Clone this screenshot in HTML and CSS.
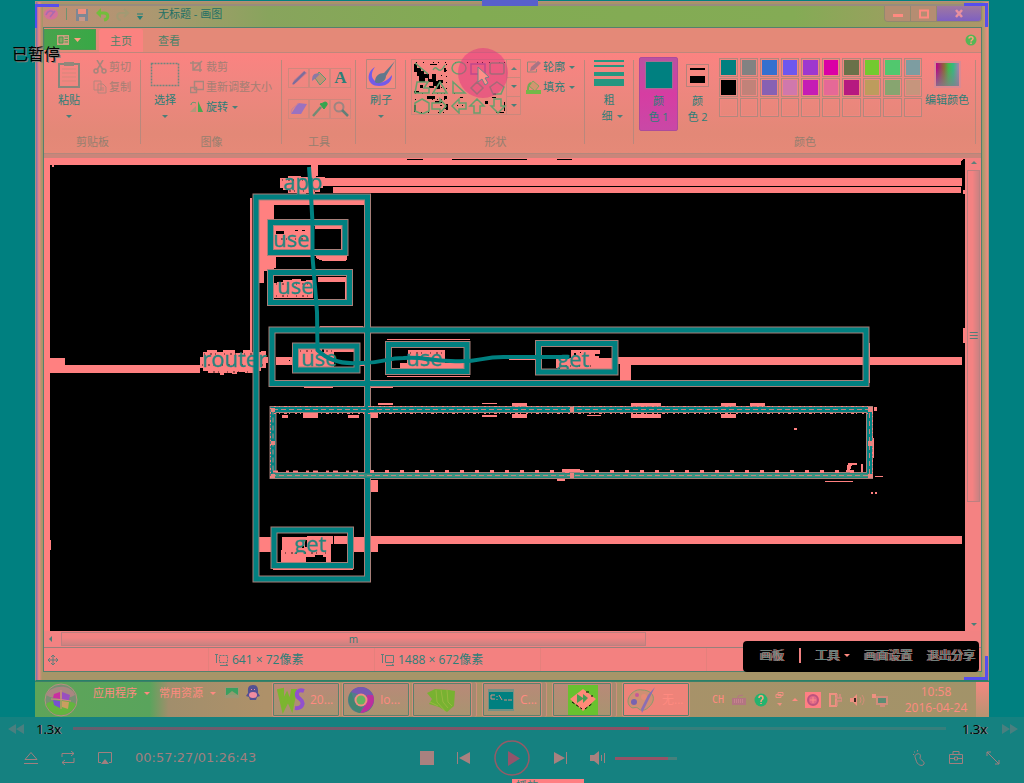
FILE: index.html
```html
<!DOCTYPE html>
<html lang="zh-CN">
<head>
<meta charset="utf-8">
<title>无标题 - 画图</title>
<link rel="stylesheet" href="styles.css">
</head>
<body>
<main class="screen">
  <section class="window">
    <i class="corner corner-tl"></i><i class="corner corner-tr"></i><i class="corner corner-br"></i><i class="grip"></i>
    <header class="titlebar">
      <svg class="quick" width="104" height="20" viewBox="0 0 104 20" fill="none">
        <ellipse cx="8" cy="10" rx="7" ry="5.500" fill="#d4719b"/><path d="M3 11c2-5 6-5 8-2M7 13l5-6" stroke="#a96ab0" stroke-width="1.500"/>
        <path d="M23.500 4v12" stroke="#6f9270"/>
        <path d="M33 5h12v12H33z" fill="#7e8794"/><path d="M35 5h8v5h-8z" fill="#f08e80"/><path d="M36 13h6v4h-6z" fill="#c9988a"/>
        <path d="M55 9h6c5 0 5 6 0 7" stroke="#72bd3c" stroke-width="3"/><path d="m58 4-5 5 5 5z" fill="#72bd3c"/>
        <path d="M84 9h-6c-5 0-5 6 0 7M81 5l4 4-4 4" stroke="#a29a73" stroke-width="2"/>
        <path d="M94 10h6" stroke="#237f78"/><path d="M94 12h6l-3 4z" fill="#237f78"/>
      </svg>
      <h1>无标题 - 画图</h1>
      <div class="winbtns">
        <button aria-label="最小化"><svg width="12" height="8"><path d="M1 4h10v3H1z" fill="#ff8a80"/></svg></button>
        <button aria-label="最大化"><svg width="12" height="10" fill="none"><path d="M2 1.500h8v7H2z" stroke="#ff8a80" stroke-width="2"/></svg></button>
        <button class="close" aria-label="关闭"><svg width="10" height="9"><path d="m2 1 6 7m0-7L2 8" stroke="#e890a0" stroke-width="2.500"/></svg></button>
      </div>
    </header>
    <div class="client">
      <nav class="tabs">
        <button class="file" aria-label="文件"><svg width="30" height="14" viewBox="0 0 30 14"><path d="M2 2h12v10H2z" fill="#d0a080"/><path d="M4 4h4v6H4zM9.500 4H13M9.500 6.500H13M9.500 9H13" stroke="#4a9a50" fill="#85a865"/><path d="M19 5h7l-3.500 4z" fill="#ffa080"/></svg></button>
        <button class="tab active">主页</button>
        <button class="tab">查看</button>
        <button class="help" aria-label="帮助"><svg width="12" height="12"><circle cx="6" cy="6" r="5.500" fill="#55b655"/><path d="M4 4.500c0-2.500 4-2.500 4 0 0 1.500-2 1.500-2 3m0 1v1.500" stroke="#ffa080" fill="none" stroke-width="1.500"/></svg></button>
      </nav>
      <div class="ribbon">
        <section class="group clipboard">
          <div class="tools">
            <button class="big"><svg width="26" height="30" fill="none"><path d="M3 5h20v23H3z" stroke="#87877b" stroke-width="2"/><path d="M6 10h14M6 14h14M6 18h14M6 22h14" stroke="#d5877b"/><path d="M8 3h10v4H8z" fill="#92877a"/></svg><span>粘贴</span><b class="arr"></b></button>
            <div class="list">
              <button class="dim"><svg width="14" height="14" fill="none" stroke="#a6867c" stroke-width="1.500"><path d="m4 0 6 10M10 0 4 10"/><circle cx="3" cy="11" r="2"/><circle cx="11" cy="11" r="2"/></svg>剪切</button>
              <button class="dim"><svg width="14" height="14" fill="none" stroke="#b4857d"><path d="M1 1h7v9H1zM5 4h5l3 3v6H5zM7 8h4M7 10h4"/></svg>复制</button>
            </div>
          </div><h2>剪贴板</h2>
        </section>
        <section class="group image">
          <div class="tools">
            <button class="big"><svg width="30" height="30" fill="none"><path d="M1.500 4.500h27v22h-27z" stroke="#6e867e" stroke-width="1.500" stroke-dasharray="2 1"/></svg><span>选择</span><b class="arr"></b></button>
            <div class="list">
              <button class="dim"><svg width="14" height="14" fill="none" stroke="#a6867c" stroke-width="1.500"><path d="M3 1v9h9M0 3h10v9M3 10l9-9"/></svg>裁剪</button>
              <button class="dim"><svg width="14" height="14" fill="none" stroke="#a6867c"><path d="M4.500 1.500h9v8h-9zM.500 7.500h6v5h-6z" stroke-width="1.500"/></svg>重新调整大小</button>
              <button><svg width="14" height="14"><path d="M8 1v11h5z" fill="#46a94e"/><path d="M6 6v6H0z" fill="#b0987a"/><path d="M1 5c0-3 3-3 5-2" fill="none" stroke="#4a9d70"/></svg>旋转<b class="arr"></b></button>
            </div>
          </div><h2>图像</h2>
        </section>
        <section class="group kit">
          <div class="tools kitgrid">
            <button aria-label="铅笔"><svg width="18" height="18"><path d="m2 16 2-5 10-9 3 2-10 9z" fill="#b47b92"/><path d="m3 15 12-12" stroke="#7b6c9c" stroke-width="2"/></svg></button>
            <button aria-label="填充"><svg width="18" height="18"><path d="m8 3 7 7-6 6-5-7z" fill="#c29174" stroke="#5d9873"/><path d="M9 5C3 3 1 6 1 12l4-3" fill="#8a79a4"/></svg></button>
            <button class="letter" aria-label="文本">A</button>
            <button aria-label="橡皮"><svg width="18" height="18"><path d="m8 3 9 1-6 10H1z" fill="#9a72c0"/><path d="m1 13 1-4 7-6" stroke="#c080a0" fill="none"/></svg></button>
            <button aria-label="取色"><svg width="18" height="18"><path d="m2 16 8-9" stroke="#718b75" stroke-width="2.500"/><path d="m9 4 4 5 3-4c1-4-3-3-4-2z" fill="#35a54f" stroke="#35a54f"/></svg></button>
            <button aria-label="放大镜"><svg width="18" height="18" fill="none"><circle cx="7" cy="7" r="4.500" stroke="#9c8581" stroke-width="2"/><path d="m10 10 6 6" stroke="#628079" stroke-width="2.500"/></svg></button>
          </div><h2>工具</h2>
        </section>
        <section class="group brush">
          <div class="tools"><button class="big"><svg width="30" height="30"><path d="M.500.500h29v29H.500z" fill="#f38a80" stroke="#b4877c"/><path d="M9 8C0 13 0 27 13 27c9 0 13-5 13-11-5 6-10 9-15 7-7-3-6-10-2-15z" fill="#745be8"/><path d="m29 2-9 15c0 6-8 9-11 6 0-6 4-9 9-9z" fill="#61788c"/></svg><span>刷子</span><b class="arr"></b></button></div><h2></h2>
        </section>
        <section class="group shapes">
          <div class="tools">
            <div class="gallery">
              <svg width="94" height="54" viewBox="0 0 94 54" fill="none">
                <g fill="#000" shape-rendering="crispEdges"><path d="M2 4h3v4h4v3h3v3h5v5h3v-5h4v7h4v8h-4v-3h-3v-4h-5v-4h-3v4H7v-6H5v-4H2zM18 4h7v1h-7zM32 8h2v4h-2zM26 20h5v3h-5zM8 25h3v3H8zM17 26h5v2h-5zM2 31h5v2H2zM15 36h8v3h-8zM23 41h7v2h-7zM32 36h3v3h-3zM48 37h3v1h-3zM73 41h3v3h-3zM80 37h4v1h-4zM81 33h3v2h-3zM92 42h1v9h-1zM84 52h8v1h-8zM2 45h2v7H2zM31 48h5v1h-5zM34 44h2v6h-2z"/><path d="M4 2h90M3 33h42M3 39h35M28 45h29M9 52h28" stroke="#000" stroke-dasharray="1 6 1 9 1 4"/><path d="M34 4v25M29 15v36" stroke="#000" stroke-dasharray="1 5"/></g>
                <g stroke="#68a06d" stroke-width="1.500"><path d="m3 3 13 11M21 10c4-8 5 8 12-5"/><ellipse cx="47" cy="8" rx="7" ry="6"/><path d="M59 4h14v10H59z" stroke="#9a5f96"/><rect x="78" y="3" width="14" height="11" rx="2"/><path d="M5 22h11l-4 6h5v5H3zM28 22l-7 11h14zM41 22v11h12zM65 22l-6 6 6 6 6-6zM85 22l7 5-3 7h-8l-3-7z"/><path d="m10 39 7 4v8l-7 3-7-3v-8zM20 43h8v-4l6 7-6 7v-4h-8zM54 43h-7v-4l-7 7 7 7v-4h7zM65 39l-7 7h4v7h6v-7h4zM82 39h7v7h4l-7 7-7-7h3z"/></g>
              </svg>
              <div class="gside"><button aria-label="上"><b class="up"></b></button><button aria-label="下"><b class="arr"></b></button><button aria-label="更多"><b class="arr"></b></button></div>
              <div class="halo"><svg width="12" height="20"><path d="M1 1v15l4-3 3 6 3-2-3-5 4-1z" fill="#ff8f88" stroke="#6f8788"/></svg></div>
            </div>
            <div class="list">
              <button><svg width="15" height="14"><path d="M10 2H1.500v10h9V9" stroke="#91887a" fill="none"/><path d="m4 11 1-4 7-6 3 2-7 7z" fill="#a87585"/></svg>轮廓<b class="arr"></b></button>
              <button><svg width="15" height="14"><path d="M0 10h15v4H0z" fill="#73b948"/><path d="m7 1 6 5-4 5-6-5z" fill="#d39470" stroke="#80a65e"/><path d="M5 3C2 4 2 8 2 10" stroke="#75a855" fill="none" stroke-width="2"/></svg>填充<b class="arr"></b></button>
            </div>
          </div><h2>形状</h2>
        </section>
        <section class="group size">
          <div class="tools"><button class="big"><svg width="30" height="30" fill="#269680"><path d="M0 1h30v2H0zM0 6h30v2H0zM0 13h30v4H0zM0 20h30v7H0z"/></svg><span>粗</span><span>细<b class="arr"></b></span></button></div><h2></h2>
        </section>
        <section class="group colours">
          <div class="tools">
            <button class="pick on"><i class="sw1"></i><span>颜</span><span>色 1</span></button>
            <button class="pick"><i class="sw2"></i><span>颜</span><span>色 2</span></button>
            <div class="palette">
              <button class="c1"></button><button class="c2"></button><button class="c3"></button><button class="c4"></button><button class="c5"></button><button class="c6"></button><button class="c7"></button><button class="c8"></button><button class="c9"></button><button class="c10"></button>
              <button class="c11"></button><button class="c12"></button><button class="c13"></button><button class="c14"></button><button class="c15"></button><button class="c16"></button><button class="c17"></button><button class="c18"></button><button class="c19"></button><button class="c20"></button>
              <button></button><button></button><button></button><button></button><button></button><button></button><button></button><button></button><button></button><button></button>
            </div>
            <button class="big edit"><i class="spectrum"></i><span>编辑颜色</span></button>
          </div><h2>颜色</h2>
        </section>
      </div>
      <div class="work">
        <svg class="canvas" viewBox="50 158 915 473" preserveAspectRatio="xMinYMin slice" fill="none">
          <defs>
            <clipPath id="g1"><path d="M550 340h60v29h-60z"/></clipPath><clipPath id="g2"><path d="M290 525h60v29h-60z"/></clipPath>
          </defs>
          <path d="M50 158h915v473H50z" fill="#000"/>
          <g fill="#ff8080" shape-rendering="crispEdges">
            <path d="M50 158h915v1h-2l-2 2v4H54v2h-2v-2h-2z"/>
            <path d="M311 164h7v12h-7zM323 178h639v8H323zM333 187h628v6H333z"/>
            <path d="M250 198h2v170h-2zM258 199h110v6h-94v66h-10v12h-6z"/>
            <path d="M273 225h40v25h-40zM315 225h28v4h-28zM341 229h1v20h-1zM316 256h31v3l-2 2h-22l-6-2zM266 255h10v13h-10zM274 255h37v2h-37z"/>
            <path d="M318 277h28v22h-1v-17h-27zM273 274h40v1h-40z"/>
            <path d="M50 358h15v7h135v8H50zM276 357h20v8h-20zM355 362h12v4h-12zM618 357h344v8H631v15h-11v-16h-2zM304 387h29v1h-29zM370 386h23v2h-23zM320 326h43v1h-43zM387 339h83v1h-83zM387 376h83v1h-83zM863 332h1v50h-1zM869 343h1v40h-1zM299 367h56v2h-56zM324 349h30v3h-30zM400 363h64v7h-64zM509 357h30v3h-30zM560 358h54v12h-54z"/>
            <path d="M259 537h13v15h-13zM353 537h13v15h-13zM370 536h592v8H378v8h-8zM334 536h15v8h-15zM273 569h80v1h-80zM370 480h8v12h-8zM259 576h107v1H259z"/>
            <path d="M282 415h6v3h-6zM303 413h15v5h-15zM348 415h11v3h-11zM370 412h8v6h-8zM378 403h15v2h-15zM482 403h15v1h-15zM482 415h15v2h-15zM512 403h15v3h-15zM512 414h15v4h-15zM631 403h30v3h-30zM631 414h30v4h-30zM721 403h15v3h-15zM721 414h15v4h-15zM750 403h15v3h-15zM587 415h14v1h-14zM794 428h3v2h-3zM874 407h3v4h-3zM870 412h3v18h-3zM872 438h2v20h-2zM875 476h8v1h-8zM871 492h2v2h-2zM875 492h2v2h-2zM825 481h28v1h-28zM557 479h8v2h-8zM562 469h18v4h-18zM846 472l2-9h9v2h-5l-3 8h-3zM861 464h2v8h-2z"/>
            <path d="M50 540h1v10h-1zM963 190h2v4h-2zM963 328h2v15h-2z"/>
            <path d="M280 178h8v-2h13v1h9v-2h6v2h9v6h-2v5h-3v4h-5v2h-4v-1h-5v1h-9v-1h-9v-3h-5v-2h-3z"/>
            <path d="M200 357h3v-5h4v-2h10v2h6v-2h12v3h8v-3h7v2h11v-1h5v6h2v6h-2v5h-5v3h-4v2h-12v-1h-8v2h-5v-1h-8v2h-4v-2h-12v-2h-5v-3h-3z"/>
            <path d="M273 283h4v-1h6v-2h9v-1h9v2h5v-1h7v18h-40zM408 350h37v14h20v5h-58v-11h1zM298 349h24v3h12v16h-36zM571 350h29v4h-5v2h4v12h-43v-10h15z"/>
            <path d="M282 537h25v-1h26v8h-2v19h-5v-6h-3v-2h-8v2h-9v6h-25z"/>
          </g>
          <path d="M333 186.500h628M407 159.500h16M452 159.500h75M557 159.500h15" stroke="#000"/>
          <g fill="#000"><path d="M276 231h8v3h-8zM295 230h3v1h-3zM302 230h3v1h-3zM302 236h1v1h-1zM305 540h2v7h-2zM302 546h2v2h-2zM322 556h1v3h-1zM331 547h1v2h-1zM289 360h1v1h-1zM574 353h2v2h-2zM580 352h1v1h-1z"/></g>
          <g stroke="#000" stroke-dasharray="1 5 2 3 1 8" opacity=".8"><path d="M282 180h36M283 191h35M204 354h58M207 372h50M202 365h62M276 284h36M276 296h36M410 353h34M559 366h38M300 351h32M285 553h42M275 239h36"/></g>
          <g stroke="#a77f79" stroke-width="7"><path d="M256 197h111.500v382H256zM270.500 222.500H345v30h-74.500zM270.500 272.500h79v30h-79zM272 330h594v53.500H272zM295.500 346H357v24h-61.500zM388.500 344.500H467v27h-78.500zM538.500 343.500H615V372h-76.500zM273 409.500h596.500v66H273zM274 530h76.500v35.500H274z"/></g>
          <g font-family="'Open Sans','Noto Sans',sans-serif" font-size="22" fill="#26867f" stroke="#26867f" stroke-width=".3"><text x="283" y="190">app</text><text x="273" y="247">use</text><text x="277" y="294">use</text><text x="202" y="367">router</text><text x="301" y="366">use</text><text x="406" y="366">use</text><text x="557" y="367" clip-path="url(#g1)">get</text><text x="294" y="552" clip-path="url(#g2)">get</text></g>
          <g stroke="#008080" stroke-width="5"><path d="M256 197h111.500v382H256zM270.500 222.500H345v30h-74.500zM270.500 272.500h79v30h-79zM272 330h594v53.500H272zM295.500 346H357v24h-61.500zM388.500 344.500H467v27h-78.500zM538.500 343.500H615V372h-76.500zM273 409.500h596.500v66H273zM274 530h76.500v35.500H274z"/>
          <path d="m309 167 2 28 1.500 28v34l2.500 30 2 25 .500 38c10 10 24 14 40 13 24 1 28-5 46-5 20-2 24 3 47 3 34 2 28-5 57-4h62" stroke-width="4"/></g>
          <path d="M273 475.500h596.500" stroke="#3c8f7c" stroke-width="4"/>
          <path d="M273 409.500h596.500v66H273z" stroke="#bd8680" stroke-dasharray="5 3"/>
          <path d="M274 406.500h596M274 413.500h596" stroke="#ff8080" stroke-dasharray="2 3 1 4 3 2 1 5"/>
          <path d="M370 471.500h490" stroke="#ff8080" stroke-width="3" stroke-dasharray="4 11"/><path d="M273 471.500h92" stroke="#ff8080" stroke-width="2" stroke-dasharray="5 8 3 4"/>
          <path d="M270.500 408v70M872.500 408v70" stroke="#ff8080" stroke-dasharray="1 3 2 2"/>
          <g fill="#e68580"><path d="M271 408h4v4h-4zM570 407h4v5h-4zM868 407h5v5h-5zM271 441h4v4h-4zM868 441h5v5h-5zM271 474h4v4h-4zM570 473h4v5h-4zM868 474h5v4h-5z"/></g>
        </svg>
        <div class="vscroll"><b class="up"></b><i class="vthumb">≡</i><b class="arr"></b></div>
      </div>
      <div class="hscroll"><b class="left"></b><i class="hthumb">m</i></div>
      <footer class="status">
        <span class="st-pos"><svg width="12" height="12" fill="none" stroke="#5f7d7a"><path d="M6 1v10M1 6h10M4 3l2-2 2 2M4 9l2 2 2-2M3 4 1 6l2 2M9 4l2 2-2 2"/></svg></span>
        <span class="st"><svg width="14" height="14" fill="none" stroke="#5f7d7a"><path d="M1.500 2v8M0 1.500h3M5 12.500h8M11 11l2 1.500"/><path d="M4.500 2.500h8v7h-8z" stroke-dasharray="2 1"/></svg>641 × 72像素</span>
        <span class="st wide"><svg width="14" height="14" fill="none" stroke="#5f7d7a"><path d="M1.500 2v8M0 1.500h3M5 12.500h8M11 11l2 1.500M4.500 2.500h8v7h-8z"/></svg>1488 × 672像素</span>
        <span class="st"></span>
      </footer>
    </div>
    <div class="share"><a href="#">画板</a><span class="bar"></span><a href="#">工具<b class="arr pink"></b></a><a href="#">画面设置</a><a href="#">退出分享</a></div>
  </section>
  <footer class="taskbar">
    <button class="orb" aria-label="开始"><svg width="36" height="34" viewBox="0 1 36 34"><circle cx="18" cy="18" r="16" fill="#778f73" stroke="#b69080"/><path d="M3 22c8-5 20-5 30 0-3 7-8 11-15 11S6 30 3 22z" fill="#64b43f"/><path d="M3 13C7 3 28 1 32 13c-9 5-20 5-29 0z" fill="#a98681"/><path d="m11 12 6-2v7l-7-1z" fill="#c92fa0"/><path d="m19 10 8 3-1 5h-7z" fill="#984fc0"/><path d="m10 18 7 1v7l-6-3z" fill="#7751d0"/><path d="m19 19 7 1-1 7-6-2z" fill="#ca9e60"/><path d="M8 17q9 0 20 2M18 8v19" stroke="#d48c80" fill="none"/></svg></button>
    <div class="bands"><a href="#">应用程序<b class="arr pink"></b></a><a href="#">常用资源<b class="arr pink"></b></a>
      <svg width="14" height="14"><path d="M0 2h14v11H0z" fill="#9d9675"/><path d="M1 3h12v7H1z" fill="#3aa060"/><path d="m2 10 5-4 6 4z" fill="#8f9c70"/></svg>
      <svg width="16" height="16"><path d="M8 0c6 0 5 6 5 8l2 3-3 1-1 3H5l-1-3-3-1 2-3C3 5 2 0 8 0z" fill="#535093"/><ellipse cx="8" cy="10" rx="4" ry="3" fill="#f08ca0"/><path d="M6 4h1v1H6zM9 4h1v1H9z" fill="#f08ca0"/></svg></div>
    <div class="tasks">
      <button class="task"><svg width="28" height="28"><path d="m1 4 5 21 5-10 4 9 4-20h-4l-2 11-3-8-4 8L6 3z" fill="#7cb530" stroke="#7cb530" stroke-width="2"/><path d="M27 5c-8-3-9 5-4 8 5 4 2 10-5 9" stroke="#9150ce" stroke-width="4" fill="none"/></svg>20...</button>
      <button class="task"><svg width="28" height="28"><circle cx="14" cy="14" r="13" fill="#547c8a"/><path d="M4 6C9-1 21-1 26 9H14z" fill="#7857b2"/><path d="M26 9c4 9-5 18-13 18l6-9 1-9z" fill="#bd2f9d"/><path d="M4 6c-6 9 0 19 9 21l3-8-8-3z" fill="#428573"/><circle cx="14" cy="14" r="6.500" fill="#f18c81"/><circle cx="14" cy="14" r="4.500" fill="#67b260"/></svg>Io...</button>
      <button class="task stack"><svg width="30" height="26"><path d="m1 6 8-4 14 1 6 1-1 15-7 6-8-5-10-3 3-5z" fill="#78b231"/><path d="m10 3 1 12 8 9M15 3l2 12 5 6M21 3l1 12 4 4M4 15l8 4" stroke="#97b841" fill="none"/></svg></button>
      <button class="task stack"><svg width="28" height="22"><path d="M1 0h26v22H1z" fill="#729184"/><path d="M2 3h24v17H2z" fill="#008080"/><path d="M8 6H4v4h4M10 7v1m0 2v1m2-5 3 5m2 0h3m1 0h4" stroke="#d79080" fill="none"/></svg>C...</button>
      <button class="task stack"><svg width="30" height="30"><path d="M0 0h30v30H0z" fill="#68c12f"/><path d="M15 4 28 14 15 26 2 14z" fill="#ff8a78"/><path d="m9 9 6 4V9l5 4-5 5v-4l-6 4z" fill="#489d55"/><path d="m4 17 10 7M17 24l8-6M18 7h4M23 11h2" stroke="#000" stroke-dasharray="3 2"/></svg></button>
      <button class="task on"><svg width="30" height="28"><path d="M15 4C7 2-2 12 2 19c4 6 6 0 10 4s12-2 14-8c2-7-4-11-11-11z" fill="#cf8f74" stroke="#8a9a6b"/><circle cx="7" cy="16" r="3" fill="#7862b0"/><circle cx="10" cy="9" r="2" fill="#c75798"/><circle cx="17" cy="11" r="3" fill="#e58b76"/><path d="m28 1-8 16-5 10-1-4 7-14z" fill="#8c6eb2"/></svg>无...</button>
    </div>
    <div class="tray"><span class="lang">CH</span>
      <svg width="16" height="14"><path d="M1 5h14v7H1z" fill="#b37582"/><path d="M3 7h10M3 9h10" stroke="#d7929a" stroke-dasharray="1 1"/><path d="M7 5V3l5-1" stroke="#b37582" fill="none"/></svg>
      <svg width="14" height="14"><circle cx="7" cy="7" r="6.500" fill="#24b36e"/><path d="M5 5c0-3 4-3 4 0 0 2-2 1-2 4m0 1v1" stroke="#ffa080" fill="none" stroke-width="1.500"/></svg>
      <svg width="10" height="18" fill="none"><path d="M3 1.500h5v3H3zM1 3.500h5v3H1z" stroke="#f19080"/><path d="M2 12h5l-2 3z" fill="#f19080"/></svg>
      <b class="up pink"></b>
      <svg width="16" height="16"><path d="M0 0h16v16H0z" fill="#ff7f83"/><circle cx="8" cy="8" r="5" fill="#df6a87" stroke="#bd547e" stroke-width="2"/><path d="M5 8h6M8 5v6" stroke="#ff8a88"/></svg>
      <svg width="14" height="16" fill="none"><path d="M2 2h6v12H2z" stroke="#ef9080" stroke-width="2"/><path d="M9 2v4m3-4v4M7 6h7v3H9v5" stroke="#d88c80" stroke-width="1.500"/></svg>
      <svg width="16" height="14"><path d="M1 5h3l4-4v12L4 9H1z" fill="#ef9080"/><path d="M6 5v4" stroke="#000" stroke-width="1.500"/><path d="M11 4q2 3 0 6M13 2q4 5 0 10" stroke="#d48d78" fill="none"/></svg>
      <svg width="16" height="14" fill="none"><path d="M5 4h10v7H5zM8 13h5" stroke="#d08d7b" stroke-width="2"/><path d="M6 5h8v5H6z" fill="#5b8c74"/><path d="M0 1h4v4H0z" fill="#ef9080"/></svg>
      <time class="clock"><span>10:58</span><span>2016-04-24</span></time><i class="peek"></i></div>
  </footer>
  <p class="paused">已暂停</p>
</main>
<footer class="player">
  <div class="progress"><button aria-label="后退"><svg width="16" height="10" fill="#4a7f7f"><path d="M8 0v10L0 5zM16 0v10L8 5z"/></svg></button><span class="rate">1.3x</span><input class="seek" type="range" min="0" max="100" value="66" aria-label="进度"><span class="rate">1.3x</span><button aria-label="前进"><svg width="16" height="10" fill="#4a7f7f"><path d="M0 0v10l8-5zM8 0v10l8-5z"/></svg></button></div>
  <div class="controls">
    <div class="left-set">
      <button aria-label="打开"><svg width="14" height="14"><path d="m7 1.500 6 7H1zM0 12.500h14"/></svg></button>
      <button aria-label="循环"><svg width="14" height="14"><path d="M1 6V2.500h12M10 0l3 2.500L10 5M13 7v4.500H1M4 9l-3 2.500L4 14"/></svg></button>
      <button aria-label="投屏"><svg width="14" height="14"><path d="M3 11.500H.500v-10h13v10H11"/><path d="m7 8 4 5H3z" fill="#a17f7f" stroke="none"/></svg></button>
      <span class="time">00:57:27/01:26:43</span>
    </div>
    <div class="mid-set">
      <button aria-label="停止"><svg width="14" height="14"><path d="M0 0h14v14H0z" class="solid"/></svg></button>
      <button aria-label="上一个"><svg width="14" height="14"><path d="M.500 1v12"/><path d="M13 1v12L2 7z" class="solid"/></svg></button>
      <button aria-label="播放"><svg width="36" height="36"><circle cx="18" cy="18" r="17" stroke="#955b66" stroke-width="1.500"/><path d="M14 11v15l12-7.500z" fill="#93546b" stroke="none"/></svg></button>
      <button aria-label="下一个"><svg width="14" height="14"><path d="M13.500 1v12"/><path d="M1 1v12l11-6z" class="solid"/></svg></button>
      <button aria-label="音量"><svg width="15" height="14"><path d="M0 4h4l5-4v14l-5-4H0z" class="solid"/><path d="M11.500 4v6M14.500 2v10"/></svg></button>
    </div>
    <div class="right-set"><input class="vol" type="range" min="0" max="100" value="86" aria-label="音量大小"><span class="fill"></span>
      <button aria-label="音效"><svg width="14" height="16"><path d="M5 4c3-1 4 1 3 4 0 2 5 3 4 6-2 3-7 1-8-4-1-3-2-5 1-6zM1.500 4v1M2.500 1.500v1M5.500 0v1.500"/></svg></button>
      <button aria-label="工具箱"><svg width="14" height="14"><path d="M.500 3.500h13v9H.500zM4 3V.500h6V3M1 7.500h4m4 0h4M5.500 6h3v3h-3z"/></svg></button>
      <button aria-label="全屏"><svg width="14" height="14"><path d="m1 1 12 12M1 5V1h4M13 9v4H9"/></svg></button>
    </div>
  </div>
  <div class="tip">播放</div>
</footer>
</body>
</html>
```

FILE: styles.css
```css
* { box-sizing: border-box; }
body { margin: 0; min-height: 100vh; display: flex; flex-direction: column; background: #008080; font: 11px/16px "Open Sans", "Noto Sans CJK SC", sans-serif; color: #2c7f78; overflow: hidden; }
button { border: 0; margin: 0; padding: 0; background: none; font: inherit; color: inherit; }
h1, h2, p { margin: 0; font: inherit; }
a { color: inherit; text-decoration: none; }
i { font-style: normal; }
svg { display: block; flex: none; }
.arr, .up, .left { display: block; flex: none; width: 0; height: 0; border: 3px solid transparent; }
.arr { border-top-color: #4a7f78; border-bottom: 0; }
.up { border-bottom-color: #5f807a; border-top: 0; }
.left { border-right-color: #4a7f78; border-left: 0; }
.arr.pink { border-top-color: #ff8a80; }
.up.pink { border-bottom-color: #ff8a80; }

.screen { position: relative; flex: 1; display: flex; flex-direction: column; padding: 1px 35px 0; }
.window { position: relative; flex: 1; display: flex; flex-direction: column; padding: 2px 6px 8px 7px; border: 1px solid #b68c7c; border-bottom-color: #288068; background: linear-gradient(90deg, #7a70b0 0, #f08580 3px, #a79568 6px, #a79568 99%, #86a263 99.200%, #f08b80 100%); }
.corner { position: absolute; width: 24px; height: 24px; border: 0 solid #574eed; }
.corner-tl { left: -1px; top: 2px; border-width: 3px 0 0 2px; }
.corner-tr { right: 0; top: 1px; border-width: 3px 3px 0 0; }
.corner-br { right: 0; bottom: 0; border-width: 0 3px 3px 0; }
.grip { position: absolute; left: 446px; top: -2px; width: 56px; height: 6px; background: #5860cc; }
.titlebar { display: flex; align-items: center; height: 23px; padding-bottom: 5px; border-top: 2px solid #988b7e; background: linear-gradient(90deg, #c18e76 0, #ab9870 12%, #88a45d 24%, #82ab53 45%, #84ab55 80%, #ad9668 100%); }
.quick { margin-right: 11px; }
.titlebar h1 { flex: 1; color: #236f65; }
.winbtns { display: flex; align-self: flex-start; height: 16px; border: 1px solid #92896f; border-top: 0; border-radius: 0 0 4px 4px; overflow: hidden; }
.winbtns button { width: 26px; display: grid; place-items: center; border-right: 1px solid #92896f; background: #b58d72; }
.winbtns .close { width: 44px; background: linear-gradient(#a078a0, #7e60c2); border: 0; }

.client { flex: 1; display: flex; flex-direction: column; border: 1px solid #55806d; background: #f48282; }
.tabs { display: flex; align-items: flex-end; height: 25px; background: #e48978; border-bottom: 1px solid #bf877b; }
.file { align-self: flex-start; width: 52px; height: 21px; margin-top: 1px; display: grid; place-items: center; background: linear-gradient(90deg, #48a34c, #38a846); border: 1px solid #4c9a50; }
.tab { width: 44px; height: 23px; margin: 0 4px; color: #4b8268; }
.tab.active { margin: 0 0 0 3px; border-radius: 2px 2px 0 0; background: #fb8280; }
.help { margin: 0 4px 6px auto; }
.ribbon { display: flex; height: 101px; background: linear-gradient(#fb8381, #f08680 30%, #e38877 80%, #e58978); border-bottom: 1px solid #b5877b; }
.group { display: flex; flex-direction: column; flex: none; position: relative; padding-top: 6px; }
.group::after { content: ""; position: absolute; right: 0; top: 7px; height: 84px; border-right: 1px solid #b9887c; }
.tools { display: flex; height: 75px; }
.group h2 { height: 16px; line-height: 16px; text-align: center; color: #967f6f; }
.big { display: flex; flex-direction: column; align-items: center; align-self: flex-start; }
.big > svg { margin-bottom: 3px; }
.big .arr { margin-top: 7px; }
.big span { display: flex; align-items: center; gap: 4px; white-space: nowrap; }
.big span .arr { margin: 0; }
.list { display: flex; flex-direction: column; gap: 4px; }
.list button { display: flex; align-items: center; gap: 2px; height: 16px; white-space: nowrap; }
.list .arr { margin-left: 2px; }
.dim { color: #a47f74; }
.clipboard { width: 97px; } .clipboard .tools { padding-left: 12px; gap: 11px; }
.image { width: 141px; } .image .tools { padding-left: 9px; gap: 10px; }
.kit { width: 74px; }
.kitgrid { display: grid; grid-template-columns: repeat(3, 21px); grid-auto-rows: 20px; gap: 11px 0; padding: 9px 0 0 6px; }
.kitgrid button { display: grid; place-items: center; border: 1px solid #cf887d; }
.letter { font: bold 17px/18px "Liberation Serif", serif; }
.brush { width: 50px; } .brush .tools { padding-left: 10px; }
.shapes { width: 179px; } .shapes .tools { padding-left: 5px; gap: 5px; }
.gallery { position: relative; display: flex; width: 110px; height: 56px; border: 1px solid #c9887c; }
.gside { display: grid; width: 14px; border-left: 1px solid #c9887c; }
.gside button { display: grid; place-items: center; border-bottom: 1px solid #c9887c; }
.gside button:last-child { border-bottom: 0; }
.halo { position: absolute; left: 46px; top: -12px; width: 50px; height: 50px; border-radius: 50%; background: rgba(228, 50, 130, .5); padding: 18px 0 0 19px; }
.size { width: 49px; } .size .tools { padding-left: 9px; }
.size .big span:last-child { padding-left: 6px; }
.colours { flex: 1; margin-right: 5px; } .colours .tools { padding-left: 5px; }
.pick { display: flex; flex-direction: column; align-items: center; width: 39px; height: 74px; margin-top: -2px; border: 1px solid transparent; border-radius: 2px; white-space: pre; }
.pick.on { background: linear-gradient(#ba51a2, #d63da2 50%, #c948a6); border-color: #ad4b9b; }
.pick i { width: 28px; height: 28px; margin: 3px 0 4px; border: 1px solid #a36d92; background: #008080; }
.pick .sw2 { width: 23px; height: 23px; margin: 6px 0; border: 4px solid #f58780; outline: 1px solid #b4837c; outline-offset: -1px; background: linear-gradient(#000 2px, #f58780 2px, #f58780 8px, #000 8px); }
.palette { display: grid; grid-template-columns: repeat(10, 1fr); width: 203px; grid-auto-rows: 19px; gap: 1px 2px; align-content: start; margin: -1px 3px 0 2px; }
.palette button { border: 1px solid #b2887c; box-shadow: inset 0 0 0 1px #f08780; }
.c1 { background: #008080; } .c2 { background: #828282; } .c3 { background: #3570cf; } .c4 { background: #6e57ef; } .c5 { background: #9e38cf; } .c6 { background: #da00a6; } .c7 { background: #6a7149; } .c8 { background: #72ca30; } .c9 { background: #51c86e; } .c10 { background: #7d9da1; }
.c11 { background: #000; } .c12 { background: #c18279; } .c13 { background: #8761b3; } .c14 { background: #d078ac; } .c15 { background: #c51cb5; } .c16 { background: #e56997; } .c17 { background: #b61980; } .c18 { background: #bd9c5d; } .c19 { background: #87a570; } .c20 { background: #c6957d; }
.spectrum { width: 27px; height: 27px; margin: 2px 0 4px; border: 2px solid #db8991; background: linear-gradient(transparent 20%, rgba(128,128,140,.8)), linear-gradient(90deg, #b8008d, #8c6a38 35%, #42b94b 55%, #34b982 75%, #a77fb0); }

.work { flex: 1; display: flex; min-height: 0; padding-top: 4px; padding-left: 6px; background: linear-gradient(#c9857a 4px, #ff8080 4px); }
.canvas { flex: 1; min-width: 0; width: 0; height: 100%; }
.vscroll { width: 16px; display: flex; flex-direction: column; align-items: center; padding: 3px 1px 5px 2px; background: #f48282; }
.vthumb { flex: 0 1 332px; width: 100%; margin: 6px 0 auto; display: grid; place-items: center; border: 1px solid #bd8080; background: linear-gradient(90deg, #f48282 40%, #c98282); }
.hscroll { height: 16px; display: flex; align-items: center; padding-left: 5px; background: #f28282; }
.hthumb { width: 585px; height: 14px; margin-left: 9px; display: grid; place-items: center; font-size: 10px; line-height: 10px; border: 1px solid #bd8080; background: linear-gradient(#f28282 40%, #c98280); }
.status { height: 24px; display: flex; border-top: 1px solid #97807b; font-size: 12px; background: #f38180; }
.st-pos { width: 165px; padding: 6px 0 0 3px; border-right: 1px solid #e5807c; }
.st { width: 166px; display: flex; align-items: center; gap: 3px; padding-left: 6px; border-right: 1px solid #e5807c; }
.share { position: absolute; right: 9px; bottom: 8px; display: flex; align-items: center; width: 236px; height: 31px; padding: 0 4px 2px 17px; justify-content: space-between; border-radius: 4px; background: #000; color: #5c8580; font-size: 12px; text-shadow: 1px 0 #d47c7a, -1px 0 #ba7470; white-space: nowrap; }
.share a { display: flex; align-items: center; gap: 4px; }
.share .bar { width: 2px; height: 15px; background: #f08080; }

.taskbar { display: flex; height: 36px; border-top: 1px solid #3b8068; background: linear-gradient(90deg, #5ea459 0, #59a45c 12%, #a18e6c 14%, #ae9169 24%, #a29369 100%); color: #ff8a80; }
.orb { width: 52px; padding-left: 8px; }
.bands { display: flex; gap: 9px; align-items: flex-start; width: 185px; padding: 3px 0 0 6px; white-space: nowrap; }
.bands a { display: flex; align-items: center; gap: 7px; }
.bands svg + svg { margin-left: -3px; }
.tasks { display: flex; gap: 2px; }
.task { display: flex; align-items: center; width: 68px; gap: 5px; padding-left: 4px; border: 1px solid #d58d7c; border-radius: 2px; background: linear-gradient(#b98978, #a89470); outline: 1px solid #5c816c; outline-offset: -2px; font-size: 12px; }
.task.stack { width: 60px; margin-right: 8px; box-shadow: 4px 0 #a68a70, 5px 0 #d08d7c; }
.task.stack:nth-child(5) { padding-left: 15px; }
.task.stack:nth-child(3) { padding-left: 13px; }
.task.on { background: #ee8379; }
.tray { display: flex; align-items: center; gap: 7px; margin-left: auto; }
.lang { font: 10px/16px "DejaVu Sans Mono", monospace; }
.clock { display: grid; width: 66px; margin-left: 8px; text-align: center; font-size: 12px; line-height: 16px; }
.peek { width: 13px; height: 100%; background: linear-gradient(#f58780, #b69471); }
.paused { position: absolute; left: 12px; top: 42px; font-size: 16px; line-height: 24px; color: #000; text-shadow: 1px 1px #80807a; }

.player { position: relative; height: 67px; background: #158180; }
.progress { display: flex; align-items: center; height: 23px; padding: 0 6px 0 8px; }
.rate { width: 37px; padding-left: 12px; font-size: 13px; color: #000; text-shadow: 1px 0 #a4837e; }
.rate + button { margin-left: 15px; }
.seek, .vol { appearance: none; height: 3px; margin: 0; }
.seek { flex: 1; margin-left: 12px; margin-right: 4px; background: linear-gradient(90deg, #63606f, #8d5064 66%, #367f7c 66%); }
.seek::-webkit-slider-thumb, .vol::-webkit-slider-thumb { appearance: none; width: 1px; height: 3px; }
.controls { display: grid; grid-template-columns: 1fr auto 1fr; align-items: center; height: 36px; }
.controls svg { fill: none; stroke: #a17f7f; }
.controls .solid { fill: #a8817f; stroke: none; }
.left-set { display: flex; align-items: center; gap: 23px; padding-left: 24px; }
.time { font: 13px/18px "DejaVu Sans", sans-serif; color: #a17f7f; }
.mid-set { display: flex; align-items: center; gap: 23px; }
.right-set { display: flex; align-items: center; gap: 23px; padding: 0 24px 0 10px; }
.vol { width: 62px; height: 3px; background: linear-gradient(90deg, #955366 86%, #47807c 86%); }
.fill { flex: 1; }
.tip { position: absolute; left: 50%; top: 62px; width: 72px; height: 20px; padding-left: 4px; line-height: 14px; background: #ff7f82; }
```
